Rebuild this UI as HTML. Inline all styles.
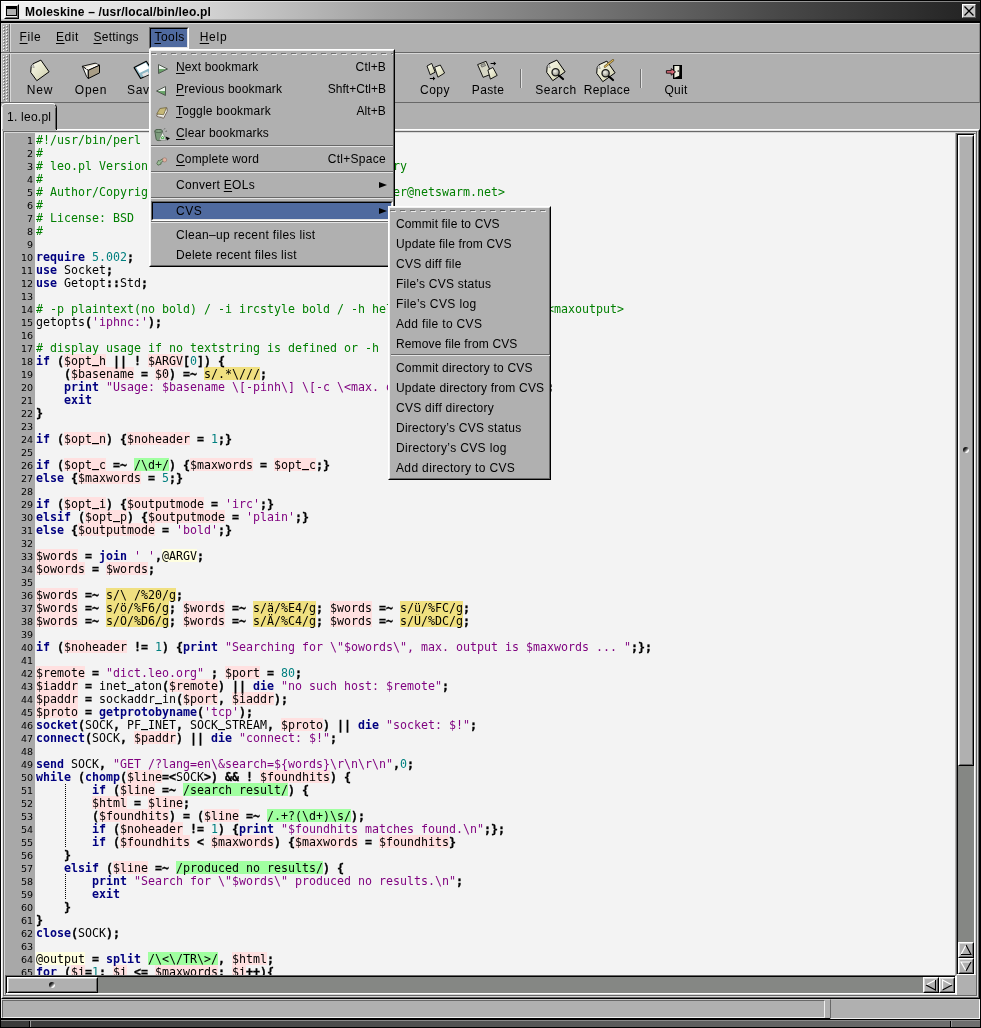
<!DOCTYPE html>
<html lang="en">
<head>
<meta charset="utf-8">
<title>Moleskine - /usr/local/bin/leo.pl</title>
<style>
*{box-sizing:border-box;margin:0;padding:0}
html,body{width:981px;height:1028px;overflow:hidden}
body{position:relative;will-change:transform;background:#000;font-family:"Liberation Sans",sans-serif;font-size:12px;color:#000;line-height:14px}
.a{position:absolute}
u{text-decoration:underline;text-decoration-thickness:1px;text-underline-offset:2px;text-decoration-skip-ink:none}
/* ---------- title bar ---------- */
#title{left:1px;top:1px;width:979px;height:20px;background:linear-gradient(to right,#f2f2f2 0,#e6e6e6 100px,#d4d4d4 200px,#a2a2a2 380px,#888 500px,#484848 780px,#222 979px)}
#title:before{content:"";position:absolute;left:0;top:0;width:100%;height:1px;background:linear-gradient(to right,#fff,#808080)}
#title:after{content:"";position:absolute;left:0;bottom:0;width:100%;height:2px;background:linear-gradient(rgba(0,0,0,.1),rgba(0,0,0,.3))}
#ttext{left:25px;top:5px;letter-spacing:.18px;font-weight:bold;white-space:pre;z-index:2}
#wicon{left:4px;top:4px;width:15px;height:15px;border:1px solid;border-color:#fff #000 #000 #fff;z-index:2}
#wicon:before{content:"";position:absolute;left:0;top:0;right:0;bottom:0;border:1px solid;border-color:transparent #707070 #707070 transparent}
#wicon i{position:absolute;left:1px;top:1px;width:11px;height:10px;border:1px solid #000;border-top-width:3px;background:#b0b0b0}
#close{left:962px;top:4px;width:14px;height:14px;border:1px solid;border-color:#fff #555 #555 #fff;background:#c4c4c4;z-index:2}
/* ---------- bars ---------- */
.bar{left:1px;width:979px;background:#b0b0b0;border-top:1px solid #d8d8d8;border-bottom:1px solid #686868;border-right:1px solid #888}
.hnd{left:0;top:0;width:9px;bottom:0;border-left:1px solid #d8d8d8;border-right:1px solid #686868}
.hnd i{position:absolute;left:0;right:0;top:1px;bottom:1px;background-repeat:repeat-y;background-size:1px 3px;
background-image:linear-gradient(#fff,#fff 1px,transparent 1px),linear-gradient(#686868,#686868 1px,transparent 1px),linear-gradient(#fff,#fff 1px,transparent 1px),linear-gradient(#686868,#686868 1px,transparent 1px);
background-position:1px 1px,2px 2px,4px 0,5px 1px}
.hl{left:9px;top:0;bottom:0;width:1px;background:#d8d8d8}
.mi{top:6px;white-space:pre}
.tb{top:29px;white-space:pre;text-align:center}
.tsep{top:15px;width:2px;height:19px;border-left:1px solid #707070;border-right:1px solid #e0e0e0}
/* ---------- notebook ---------- */
#nb{left:1px;top:103px;width:979px;height:896px;background:#b0b0b0}
#tab{left:0;top:0;width:56px;height:27px;border-top:1px solid #fff;border-left:1px solid #fff;border-right:1px solid #000;border-radius:5px 5px 0 0;background:#b0b0b0}
#tab:after{content:"";position:absolute;right:0;top:4px;bottom:0;width:1px;background:#606060}
#tab:before{content:"";position:absolute;left:0;top:3px;bottom:0;width:1px;background:#e0e0e0}
#tabtx{left:5px;top:6px;letter-spacing:.25px;white-space:pre}
#page{left:0;top:26px;width:979px;height:870px;border:solid;border-width:1px 1px 1px 1px;border-color:#fff #000 #000 #fff}
#page:before{content:"";position:absolute;left:0;top:0;right:0;bottom:0;border:1px solid;border-color:#e0e0e0 #686868 #686868 #e0e0e0}
#tabjoin{left:1px;top:26px;width:54px;height:2px;background:#b0b0b0}
#tabjoin:after{content:"";position:absolute;left:0;top:1px;width:100%;height:1px;background:#b8b8b8}
/* etched frame */
#etch1{left:3px;top:131px;width:974px;height:865px;border:1px solid #686868}
#etch2{left:4px;top:132px;width:974px;height:865px;border:1px solid #d8d8d8}
/* ---------- editor ---------- */
#ed{left:5px;top:133px;width:950px;height:842px;z-index:0;background:#f3f3f3;overflow:hidden;font-family:"DejaVu Sans Mono","Liberation Mono",monospace;font-size:11.63px;line-height:13px}
#ed:before{content:"";position:absolute;left:0;top:0;width:30px;height:100%;background:#a8a8a8}
.ln{position:relative;height:13px;padding-left:31px;white-space:pre}
.ln span{display:inline-block;height:13px;line-height:15px;vertical-align:top;overflow:visible;white-space:pre}
.no{position:absolute;left:0;top:0;width:28px;text-align:right;font:normal 9.5px/15px "DejaVu Sans","Liberation Sans",sans-serif;color:#000}
.g{position:absolute;left:60px;top:0;width:1px;height:13px;background:repeating-linear-gradient(to bottom,#000 0,#000 1px,transparent 1px,transparent 2px)}
.g1{top:1px;height:12px}
.ln em{font-style:normal;font-weight:bold;position:relative;top:-2px}
.c{color:#007f00}.k{color:#00007f;font-weight:bold}.n{color:#007f7f}.s{color:#7f007f}
.o{font-weight:bold;-webkit-text-stroke:.3px #000}.v{background:#ffe0e0}.a2{background:#ffffe0}.r{background:#a0ffa0}.u2{background:#f0e080}
/* ---------- scrollbars ---------- */
.trough{background:#868885;border:solid;border-width:1px;border-color:#686868 #fff #fff #686868}
.trough:before{content:"";position:absolute;left:0;top:0;right:0;bottom:0;border:1px solid;border-color:#000 #d8d8d8 #d8d8d8 #000}
.sl{background:#b0b0b0;border:1px solid;border-color:#fff #000 #000 #fff}
.sl:before{content:"";position:absolute;left:0;top:0;right:0;bottom:0;border:1px solid;border-color:#d8d8d8 #686868 #686868 #d8d8d8}
.dim{position:absolute;width:6px;height:6px;border-radius:50%;background:linear-gradient(135deg,#000 0,#1a1a1a 30%,#707070 52%,#fff 72%,#f0f0f0 100%)}
/* ---------- status ---------- */
#status{left:1px;top:999px;width:979px;height:19px;background:#b0b0b0;border-top:1px solid #c8c8c8;border-left:1px solid #e8e8e8}
#st1{left:0;top:0;width:823px;height:18px;border:1px solid;border-color:#686868 #f0f0f0 #f0f0f0 #686868}
#st2{left:828px;top:-1px;width:150px;height:20px;background:#b0b0b0;border:1px solid;border-color:#c0c0c0 #f8f8f8 #f0f0f0 #686868}
#botf{left:1px;top:1020px;width:979px;height:7px;background:linear-gradient(to right,#3a3a3a,#6e6e6e);border-top:1px solid #8c8c8c}
.notch{top:0;width:2px;height:6px;border-left:1px solid #000;border-right:1px solid #9a9a9a}
/* ---------- menus ---------- */
.menu{background:#b0b0b0;border:1px solid;border-color:#fff #000 #000 #fff;z-index:10}
.menu:before{content:"";position:absolute;left:0;top:0;right:0;bottom:0;border:1px solid;border-color:#f0f0f0 #686868 #686868 #f0f0f0}
.it{position:absolute;left:0;white-space:pre}
.sc{position:absolute;white-space:pre;text-align:right}
.sep{position:absolute;height:2px;border-top:1px solid #686868;border-bottom:1px solid #e4e4e4}
.tear{position:absolute;height:1px;background:repeating-linear-gradient(to right,#ececec 0,#ececec 5px,transparent 5px,transparent 10px)}
.tear2{position:absolute;height:1px;background:repeating-linear-gradient(to right,#707070 0,#707070 5px,transparent 5px,transparent 10px)}
.sel{background:#4f6a9f;border:1px solid;border-color:#686868 #fff #fff #686868}
.sel:before{content:"";position:absolute;left:0;top:0;right:0;bottom:0;border:1px solid;border-color:#000 #e4e4e4 #e4e4e4 #000}
.arr{position:absolute;width:0;height:0;border-left:8px solid #000;border-top:3.5px solid transparent;border-bottom:3.5px solid transparent}
</style>
</head>
<body>
<!-- title bar -->
<div id="title" class="a"></div>
<div id="wicon" class="a"><i></i></div>
<div id="ttext" class="a">Moleskine – /usr/local/bin/leo.pl</div>
<div id="close" class="a"><svg width="12" height="12" viewBox="0 0 12 12" style="display:block"><path d="M1.5 1.5L10.5 10.5M10.5 1.5L1.5 10.5" stroke="#000" stroke-width="1.3" fill="none"/></svg></div>

<!-- menu bar -->
<div class="a bar" style="top:23px;height:30px">
 <div class="a hnd"><i></i></div><div class="a hl"></div>
 <div class="a mi" style="left:18.6px;letter-spacing:.6px"><u>F</u>ile</div>
 <div class="a mi" style="left:55px;letter-spacing:.55px"><u>E</u>dit</div>
 <div class="a mi" style="left:92.5px;letter-spacing:.25px"><u>S</u>ettings</div>
 <div class="a sel" style="left:148px;top:3px;width:40px;height:22px"></div>
 <div class="a mi" style="left:153.5px;letter-spacing:.44px"><u>T</u>ools</div>
 <div class="a mi" style="left:198.7px;letter-spacing:.75px"><u>H</u>elp</div>
</div>

<!-- tool bar -->
<div class="a bar" style="top:53px;height:50px">
 <div class="a hnd"><i></i></div><div class="a hl"></div>
 <div class="a tb" style="left:19px;width:40px;letter-spacing:.8px">New</div>
 <div class="a tb" style="left:65px;width:50px;letter-spacing:.75px">Open</div>
 <div class="a tb" style="left:121px;width:40px;letter-spacing:.6px">Save</div>
 <div class="a tb" style="left:414px;width:40px;letter-spacing:.5px">Copy</div>
 <div class="a tb" style="left:462px;width:50px;letter-spacing:.35px">Paste</div>
 <div class="a tsep" style="left:519px"></div>
 <div class="a tb" style="left:530px;width:50px;letter-spacing:.6px">Search</div>
 <div class="a tb" style="left:581px;width:50px;letter-spacing:.35px">Replace</div>
 <div class="a tsep" style="left:639px"></div>
 <div class="a tb" style="left:655px;width:40px;letter-spacing:.3px">Quit</div>
</div>

<svg class="a" style="left:0;top:53px;z-index:1" width="981" height="50" viewBox="0 53 981 50">
<defs>
<linearGradient id="gp" x1="0" y1="0" x2="1" y2="1"><stop offset="0" stop-color="#fbfbee"/><stop offset=".5" stop-color="#e6e6cc"/><stop offset="1" stop-color="#c9c9a8"/></linearGradient>
<radialGradient id="gl" cx=".4" cy=".35" r=".7"><stop offset="0" stop-color="#f0f0e8"/><stop offset="1" stop-color="#8c8c80"/></radialGradient>
</defs>
<!-- New -->
<g transform="translate(0,0)"><path d="M32.8 63.9L40.9 60.1L49.1 71.8L36.8 80.7L30.7 72.3L31.2 66.6Z" fill="url(#gp)" stroke="#000" stroke-width="1" stroke-linejoin="round"/><path d="M31.4 66.4L33 64.1L34.2 67.6Z" fill="#fff" stroke="#555" stroke-width=".5"/></g>
<!-- Open -->
<path d="M82.3 66.3L95.2 63.2L99.4 65.2L88.4 70.4Z" fill="#e9e4d6" stroke="#000" stroke-width=".9" stroke-linejoin="round"/>
<path d="M82.3 66.3L88.3 70.3L88.3 78.5L86.6 76.6Z" fill="#f5f5f0" stroke="#000" stroke-width=".9" stroke-linejoin="round"/>
<path d="M88.3 70.3L99.5 65.2L99.5 72.9L88.3 78.5Z" fill="#a89d86" stroke="#000" stroke-width="1" stroke-linejoin="round"/>
<path d="M86.2 68.8L97.5 64.6" stroke="#fff" stroke-width="1.3"/>
<!-- Save -->
<path d="M134.1 67.6L146.3 61.3L153.6 72.4L140.6 78.4Z" fill="#8db8c6" stroke="#000" stroke-width="1.1" stroke-linejoin="round"/>
<path d="M136.2 67.6L145.8 62.8L149.3 68.3L139.6 73Z" fill="#fff"/>
<path d="M142 74L147.6 71.4L149.2 74.2L143.6 76.8Z" fill="#e4e4e4"/>
<!-- Copy -->
<path d="M427 66L431.7 63.4L435.2 72.2L430.2 74.8Z" fill="url(#gp)" stroke="#000" stroke-width=".9" stroke-linejoin="round"/>
<path d="M434.6 67.2L440.3 65L444.6 73L437.9 77.2Z" fill="url(#gp)" stroke="#000" stroke-width=".9" stroke-linejoin="round"/>
<path d="M429.8 78h3.2v-1.6l2.4 2.1l-2.4 2.1v-1.6h-3.2Z" fill="#000"/>
<!-- Paste -->
<path d="M477.6 64.6L486.1 61.3L491.6 74L483.1 77.3Z" fill="#d6d6c4" stroke="#000" stroke-width=".9" stroke-linejoin="round"/>
<path d="M480.8 64.9L484.6 63.4L485.6 65.6L481.8 67.1Z" fill="#a8a8a0" stroke="#444" stroke-width=".6"/>
<path d="M487.9 70L492.9 67.5L497.2 75.4L490.4 79.1Z" fill="url(#gp)" stroke="#000" stroke-width=".9" stroke-linejoin="round"/>
<path d="M490.6 63h3.2v-1.6l2.4 2.1l-2.4 2.1v-1.6h-3.2Z" fill="#000"/>
<!-- Search -->
<g transform="translate(516,0)"><path d="M32.8 63.9L40.9 60.1L49.1 71.8L36.8 80.7L30.7 72.3L31.2 66.6Z" fill="url(#gp)" stroke="#000" stroke-width="1" stroke-linejoin="round"/><path d="M31.4 66.4L33 64.1L34.2 67.6Z" fill="#fff" stroke="#555" stroke-width=".5"/></g>
<g transform="translate(0,0)"><path d="M558.4 75L563 79" stroke="#000" stroke-width="2.2" stroke-linecap="round"/><circle cx="555.6" cy="72.3" r="3.6" fill="url(#gl)" stroke="#1a1a1a" stroke-width="1.3"/></g>
<!-- Replace -->
<g transform="translate(566,1)"><path d="M32.8 63.9L40.9 60.1L49.1 71.8L36.8 80.7L30.7 72.3L31.2 66.6Z" fill="url(#gp)" stroke="#000" stroke-width="1" stroke-linejoin="round"/><path d="M31.4 66.4L33 64.1L34.2 67.6Z" fill="#fff" stroke="#555" stroke-width=".5"/></g>
<g transform="translate(50,1)"><path d="M558.4 75L563 79" stroke="#000" stroke-width="2.2" stroke-linecap="round"/><circle cx="555.6" cy="72.3" r="3.6" fill="url(#gl)" stroke="#1a1a1a" stroke-width="1.3"/></g>
<path d="M604.9 66.7L613.1 60.1" stroke="#5a4a20" stroke-width="2.2" stroke-linecap="round"/>
<path d="M604.9 66.7L613.1 60.1" stroke="#dcb85c" stroke-width="1.2" stroke-linecap="round"/>
<!-- Quit -->
<rect x="673" y="65" width="9" height="14" fill="#000"/>
<path d="M674.4 66H679.4L679.2 75.8L674.4 77.8Z" fill="#ebebdc"/>
<rect x="677.6" y="70.4" width="1.3" height="1.3" fill="#000"/>
<path d="M666.4 70.6H671.2V68.6L675.6 71.9L671.2 75.2V73.2H666.4Z" fill="#d46876" stroke="#000" stroke-width=".8" stroke-linejoin="round"/>
</svg>

<!-- notebook -->
<div id="nb" class="a">
 <div id="page" class="a"></div>
 <div id="tab" class="a"><div id="tabtx" class="a">1. leo.pl</div></div>
 <div id="tabjoin" class="a"></div>
</div>
<div id="etch2" class="a"></div>
<div id="etch1" class="a"></div>

<!-- editor -->
<div id="ed" class="a">
<div class="ln" style="z-index:69"><b class="no">1</b><span class="c" style="width:105px">#!/usr/bin/perl</span></div>
<div class="ln" style="z-index:68"><b class="no">2</b><span class="c" style="width:7px">#</span></div>
<div class="ln" style="z-index:67"><b class="no">3</b><span class="c" style="width:371px"># leo.pl Version 0.3 - search dict.leo.org dictionary</span></div>
<div class="ln" style="z-index:66"><b class="no">4</b><span class="c" style="width:7px">#</span></div>
<div class="ln" style="z-index:65"><b class="no">5</b><span class="c" style="width:469px"># Author/Copyright: 2000-01 Michael Ziegler &lt;mziegler@netswarm.net&gt;</span></div>
<div class="ln" style="z-index:64"><b class="no">6</b><span class="c" style="width:7px">#</span></div>
<div class="ln" style="z-index:63"><b class="no">7</b><span class="c" style="width:98px"># License: BSD</span></div>
<div class="ln" style="z-index:62"><b class="no">8</b><span class="c" style="width:7px">#</span></div>
<div class="ln" style="z-index:61"><b class="no">9</b></div>
<div class="ln" style="z-index:60"><b class="no">10</b><span class="k" style="width:49px">require</span><span class="p" style="width:7px"> </span><span class="n" style="width:35px">5.002</span><span class="o" style="width:7px">;</span></div>
<div class="ln" style="z-index:59"><b class="no">11</b><span class="k" style="width:21px">use</span><span class="p" style="width:49px"> Socket</span><span class="o" style="width:7px">;</span></div>
<div class="ln" style="z-index:58"><b class="no">12</b><span class="k" style="width:21px">use</span><span class="p" style="width:49px"> Getopt</span><span class="o" style="width:14px">::</span><span class="p" style="width:21px">Std</span><span class="o" style="width:7px">;</span></div>
<div class="ln" style="z-index:57"><b class="no">13</b></div>
<div class="ln" style="z-index:56"><b class="no">14</b><span class="c" style="width:588px"># -p plaintext(no bold) / -i ircstyle bold / -h help / -n no header / -c &lt;maxoutput&gt;</span></div>
<div class="ln" style="z-index:55"><b class="no">15</b><span class="p" style="width:49px">getopts</span><span class="o" style="width:7px">(</span><span class="s" style="width:56px">'iphnc:'</span><span class="o" style="width:14px">);</span></div>
<div class="ln" style="z-index:54"><b class="no">16</b></div>
<div class="ln" style="z-index:53"><b class="no">17</b><span class="c" style="width:343px"># display usage if no textstring is defined or -h</span></div>
<div class="ln" style="z-index:52"><b class="no">18</b><span class="k" style="width:14px">if</span><span class="p" style="width:7px"> </span><span class="o" style="width:7px">(</span><span class="v" style="width:42px">$opt<em>_</em>h</span><span class="p" style="width:7px"> </span><span class="o" style="width:14px">||</span><span class="p" style="width:7px"> </span><span class="o" style="width:7px">!</span><span class="p" style="width:7px"> </span><span class="v" style="width:35px">$ARGV</span><span class="o" style="width:7px">[</span><span class="n" style="width:7px">0</span><span class="o" style="width:14px">])</span><span class="p" style="width:7px"> </span><span class="o" style="width:7px">{</span></div>
<div class="ln" style="z-index:51"><b class="no">19</b><span class="p" style="width:28px">    </span><span class="o" style="width:7px">(</span><span class="v" style="width:63px">$basename</span><span class="p" style="width:7px"> </span><span class="o" style="width:7px">=</span><span class="p" style="width:7px"> </span><span class="v" style="width:14px">$0</span><span class="o" style="width:7px">)</span><span class="p" style="width:7px"> </span><span class="o" style="width:14px">=~</span><span class="p" style="width:7px"> </span><span class="u2" style="width:56px">s/.*\///</span><span class="o" style="width:7px">;</span></div>
<div class="ln" style="z-index:50"><b class="no">20</b><span class="p" style="width:28px">    </span><span class="k" style="width:35px">print</span><span class="p" style="width:7px"> </span><span class="s" style="width:441px">"Usage: $basename \[-pinh\] \[-c \&lt;max. output\&gt;\] \&lt;words\&gt;\n"</span><span class="o" style="width:7px">;</span></div>
<div class="ln" style="z-index:49"><b class="no">21</b><span class="p" style="width:28px">    </span><span class="k" style="width:28px">exit</span></div>
<div class="ln" style="z-index:48"><b class="no">22</b><span class="o" style="width:7px">}</span></div>
<div class="ln" style="z-index:47"><b class="no">23</b></div>
<div class="ln" style="z-index:46"><b class="no">24</b><span class="k" style="width:14px">if</span><span class="p" style="width:7px"> </span><span class="o" style="width:7px">(</span><span class="v" style="width:42px">$opt<em>_</em>n</span><span class="o" style="width:7px">)</span><span class="p" style="width:7px"> </span><span class="o" style="width:7px">{</span><span class="v" style="width:63px">$noheader</span><span class="p" style="width:7px"> </span><span class="o" style="width:7px">=</span><span class="p" style="width:7px"> </span><span class="n" style="width:7px">1</span><span class="o" style="width:14px">;}</span></div>
<div class="ln" style="z-index:45"><b class="no">25</b></div>
<div class="ln" style="z-index:44"><b class="no">26</b><span class="k" style="width:14px">if</span><span class="p" style="width:7px"> </span><span class="o" style="width:7px">(</span><span class="v" style="width:42px">$opt<em>_</em>c</span><span class="p" style="width:7px"> </span><span class="o" style="width:14px">=~</span><span class="p" style="width:7px"> </span><span class="r" style="width:35px">/\d+/</span><span class="o" style="width:7px">)</span><span class="p" style="width:7px"> </span><span class="o" style="width:7px">{</span><span class="v" style="width:63px">$maxwords</span><span class="p" style="width:7px"> </span><span class="o" style="width:7px">=</span><span class="p" style="width:7px"> </span><span class="v" style="width:42px">$opt<em>_</em>c</span><span class="o" style="width:14px">;}</span></div>
<div class="ln" style="z-index:43"><b class="no">27</b><span class="k" style="width:28px">else</span><span class="p" style="width:7px"> </span><span class="o" style="width:7px">{</span><span class="v" style="width:63px">$maxwords</span><span class="p" style="width:7px"> </span><span class="o" style="width:7px">=</span><span class="p" style="width:7px"> </span><span class="n" style="width:7px">5</span><span class="o" style="width:14px">;}</span></div>
<div class="ln" style="z-index:42"><b class="no">28</b></div>
<div class="ln" style="z-index:41"><b class="no">29</b><span class="k" style="width:14px">if</span><span class="p" style="width:7px"> </span><span class="o" style="width:7px">(</span><span class="v" style="width:42px">$opt<em>_</em>i</span><span class="o" style="width:7px">)</span><span class="p" style="width:7px"> </span><span class="o" style="width:7px">{</span><span class="v" style="width:77px">$outputmode</span><span class="p" style="width:7px"> </span><span class="o" style="width:7px">=</span><span class="p" style="width:7px"> </span><span class="s" style="width:35px">'irc'</span><span class="o" style="width:14px">;}</span></div>
<div class="ln" style="z-index:40"><b class="no">30</b><span class="k" style="width:35px">elsif</span><span class="p" style="width:7px"> </span><span class="o" style="width:7px">(</span><span class="v" style="width:42px">$opt<em>_</em>p</span><span class="o" style="width:7px">)</span><span class="p" style="width:7px"> </span><span class="o" style="width:7px">{</span><span class="v" style="width:77px">$outputmode</span><span class="p" style="width:7px"> </span><span class="o" style="width:7px">=</span><span class="p" style="width:7px"> </span><span class="s" style="width:49px">'plain'</span><span class="o" style="width:14px">;}</span></div>
<div class="ln" style="z-index:39"><b class="no">31</b><span class="k" style="width:28px">else</span><span class="p" style="width:7px"> </span><span class="o" style="width:7px">{</span><span class="v" style="width:77px">$outputmode</span><span class="p" style="width:7px"> </span><span class="o" style="width:7px">=</span><span class="p" style="width:7px"> </span><span class="s" style="width:42px">'bold'</span><span class="o" style="width:14px">;}</span></div>
<div class="ln" style="z-index:38"><b class="no">32</b></div>
<div class="ln" style="z-index:37"><b class="no">33</b><span class="v" style="width:42px">$words</span><span class="p" style="width:7px"> </span><span class="o" style="width:7px">=</span><span class="p" style="width:7px"> </span><span class="k" style="width:28px">join</span><span class="p" style="width:7px"> </span><span class="s" style="width:21px">' '</span><span class="o" style="width:7px">,</span><span class="a2" style="width:35px">@ARGV</span><span class="o" style="width:7px">;</span></div>
<div class="ln" style="z-index:36"><b class="no">34</b><span class="v" style="width:49px">$owords</span><span class="p" style="width:7px"> </span><span class="o" style="width:7px">=</span><span class="p" style="width:7px"> </span><span class="v" style="width:42px">$words</span><span class="o" style="width:7px">;</span></div>
<div class="ln" style="z-index:35"><b class="no">35</b></div>
<div class="ln" style="z-index:34"><b class="no">36</b><span class="v" style="width:42px">$words</span><span class="p" style="width:7px"> </span><span class="o" style="width:14px">=~</span><span class="p" style="width:7px"> </span><span class="u2" style="width:70px">s/\ /%20/g</span><span class="o" style="width:7px">;</span></div>
<div class="ln" style="z-index:33"><b class="no">37</b><span class="v" style="width:42px">$words</span><span class="p" style="width:7px"> </span><span class="o" style="width:14px">=~</span><span class="p" style="width:7px"> </span><span class="u2" style="width:63px">s/ö/%F6/g</span><span class="o" style="width:7px">;</span><span class="p" style="width:7px"> </span><span class="v" style="width:42px">$words</span><span class="p" style="width:7px"> </span><span class="o" style="width:14px">=~</span><span class="p" style="width:7px"> </span><span class="u2" style="width:63px">s/ä/%E4/g</span><span class="o" style="width:7px">;</span><span class="p" style="width:7px"> </span><span class="v" style="width:42px">$words</span><span class="p" style="width:7px"> </span><span class="o" style="width:14px">=~</span><span class="p" style="width:7px"> </span><span class="u2" style="width:63px">s/ü/%FC/g</span><span class="o" style="width:7px">;</span></div>
<div class="ln" style="z-index:32"><b class="no">38</b><span class="v" style="width:42px">$words</span><span class="p" style="width:7px"> </span><span class="o" style="width:14px">=~</span><span class="p" style="width:7px"> </span><span class="u2" style="width:63px">s/Ö/%D6/g</span><span class="o" style="width:7px">;</span><span class="p" style="width:7px"> </span><span class="v" style="width:42px">$words</span><span class="p" style="width:7px"> </span><span class="o" style="width:14px">=~</span><span class="p" style="width:7px"> </span><span class="u2" style="width:63px">s/Ä/%C4/g</span><span class="o" style="width:7px">;</span><span class="p" style="width:7px"> </span><span class="v" style="width:42px">$words</span><span class="p" style="width:7px"> </span><span class="o" style="width:14px">=~</span><span class="p" style="width:7px"> </span><span class="u2" style="width:63px">s/Ü/%DC/g</span><span class="o" style="width:7px">;</span></div>
<div class="ln" style="z-index:31"><b class="no">39</b></div>
<div class="ln" style="z-index:30"><b class="no">40</b><span class="k" style="width:14px">if</span><span class="p" style="width:7px"> </span><span class="o" style="width:7px">(</span><span class="v" style="width:63px">$noheader</span><span class="p" style="width:7px"> </span><span class="o" style="width:14px">!=</span><span class="p" style="width:7px"> </span><span class="n" style="width:7px">1</span><span class="o" style="width:7px">)</span><span class="p" style="width:7px"> </span><span class="o" style="width:7px">{</span><span class="k" style="width:35px">print</span><span class="p" style="width:7px"> </span><span class="s" style="width:406px">"Searching for \"$owords\", max. output is $maxwords ... "</span><span class="o" style="width:21px">;};</span></div>
<div class="ln" style="z-index:29"><b class="no">41</b></div>
<div class="ln" style="z-index:28"><b class="no">42</b><span class="v" style="width:49px">$remote</span><span class="p" style="width:7px"> </span><span class="o" style="width:7px">=</span><span class="p" style="width:7px"> </span><span class="s" style="width:98px">"dict.leo.org"</span><span class="p" style="width:7px"> </span><span class="o" style="width:7px">;</span><span class="p" style="width:7px"> </span><span class="v" style="width:35px">$port</span><span class="p" style="width:7px"> </span><span class="o" style="width:7px">=</span><span class="p" style="width:7px"> </span><span class="n" style="width:14px">80</span><span class="o" style="width:7px">;</span></div>
<div class="ln" style="z-index:27"><b class="no">43</b><span class="v" style="width:42px">$iaddr</span><span class="p" style="width:7px"> </span><span class="o" style="width:7px">=</span><span class="p" style="width:70px"> inet<em>_</em>aton</span><span class="o" style="width:7px">(</span><span class="v" style="width:49px">$remote</span><span class="o" style="width:7px">)</span><span class="p" style="width:7px"> </span><span class="o" style="width:14px">||</span><span class="p" style="width:7px"> </span><span class="k" style="width:21px">die</span><span class="p" style="width:7px"> </span><span class="s" style="width:161px">"no such host: $remote"</span><span class="o" style="width:7px">;</span></div>
<div class="ln" style="z-index:26"><b class="no">44</b><span class="v" style="width:42px">$paddr</span><span class="p" style="width:7px"> </span><span class="o" style="width:7px">=</span><span class="p" style="width:84px"> sockaddr<em>_</em>in</span><span class="o" style="width:7px">(</span><span class="v" style="width:35px">$port</span><span class="o" style="width:7px">,</span><span class="p" style="width:7px"> </span><span class="v" style="width:42px">$iaddr</span><span class="o" style="width:14px">);</span></div>
<div class="ln" style="z-index:25"><b class="no">45</b><span class="v" style="width:42px">$proto</span><span class="p" style="width:7px"> </span><span class="o" style="width:7px">=</span><span class="p" style="width:7px"> </span><span class="k" style="width:98px">getprotobyname</span><span class="o" style="width:7px">(</span><span class="s" style="width:35px">'tcp'</span><span class="o" style="width:14px">);</span></div>
<div class="ln" style="z-index:24"><b class="no">46</b><span class="k" style="width:42px">socket</span><span class="o" style="width:7px">(</span><span class="p" style="width:28px">SOCK</span><span class="o" style="width:7px">,</span><span class="p" style="width:56px"> PF<em>_</em>INET</span><span class="o" style="width:7px">,</span><span class="p" style="width:84px"> SOCK<em>_</em>STREAM</span><span class="o" style="width:7px">,</span><span class="p" style="width:7px"> </span><span class="v" style="width:42px">$proto</span><span class="o" style="width:7px">)</span><span class="p" style="width:7px"> </span><span class="o" style="width:14px">||</span><span class="p" style="width:7px"> </span><span class="k" style="width:21px">die</span><span class="p" style="width:7px"> </span><span class="s" style="width:84px">"socket: $!"</span><span class="o" style="width:7px">;</span></div>
<div class="ln" style="z-index:23"><b class="no">47</b><span class="k" style="width:49px">connect</span><span class="o" style="width:7px">(</span><span class="p" style="width:28px">SOCK</span><span class="o" style="width:7px">,</span><span class="p" style="width:7px"> </span><span class="v" style="width:42px">$paddr</span><span class="o" style="width:7px">)</span><span class="p" style="width:7px"> </span><span class="o" style="width:14px">||</span><span class="p" style="width:7px"> </span><span class="k" style="width:21px">die</span><span class="p" style="width:7px"> </span><span class="s" style="width:91px">"connect: $!"</span><span class="o" style="width:7px">;</span></div>
<div class="ln" style="z-index:22"><b class="no">48</b></div>
<div class="ln" style="z-index:21"><b class="no">49</b><span class="k" style="width:28px">send</span><span class="p" style="width:35px"> SOCK</span><span class="o" style="width:7px">,</span><span class="p" style="width:7px"> </span><span class="s" style="width:280px">"GET /?lang=en\&amp;search=${words}\r\n\r\n"</span><span class="o" style="width:7px">,</span><span class="n" style="width:7px">0</span><span class="o" style="width:7px">;</span></div>
<div class="ln" style="z-index:20"><b class="no">50</b><span class="k" style="width:35px">while</span><span class="p" style="width:7px"> </span><span class="o" style="width:7px">(</span><span class="k" style="width:35px">chomp</span><span class="o" style="width:7px">(</span><span class="v" style="width:35px">$line</span><span class="o" style="width:14px">=&lt;</span><span class="p" style="width:28px">SOCK</span><span class="o" style="width:14px">&gt;)</span><span class="p" style="width:7px"> </span><span class="o" style="width:14px">&amp;&amp;</span><span class="p" style="width:7px"> </span><span class="o" style="width:7px">!</span><span class="p" style="width:7px"> </span><span class="v" style="width:70px">$foundhits</span><span class="o" style="width:7px">)</span><span class="p" style="width:7px"> </span><span class="o" style="width:7px">{</span></div>
<div class="ln" style="z-index:19"><b class="no">51</b><i class="g g1"></i><span class="p" style="width:56px">        </span><span class="k" style="width:14px">if</span><span class="p" style="width:7px"> </span><span class="o" style="width:7px">(</span><span class="v" style="width:35px">$line</span><span class="p" style="width:7px"> </span><span class="o" style="width:14px">=~</span><span class="p" style="width:7px"> </span><span class="r" style="width:105px">/search result/</span><span class="o" style="width:7px">)</span><span class="p" style="width:7px"> </span><span class="o" style="width:7px">{</span></div>
<div class="ln" style="z-index:18"><b class="no">52</b><i class="g"></i><span class="p" style="width:56px">        </span><span class="v" style="width:35px">$html</span><span class="p" style="width:7px"> </span><span class="o" style="width:7px">=</span><span class="p" style="width:7px"> </span><span class="v" style="width:35px">$line</span><span class="o" style="width:7px">;</span></div>
<div class="ln" style="z-index:17"><b class="no">53</b><i class="g g1"></i><span class="p" style="width:56px">        </span><span class="o" style="width:7px">(</span><span class="v" style="width:70px">$foundhits</span><span class="o" style="width:7px">)</span><span class="p" style="width:7px"> </span><span class="o" style="width:7px">=</span><span class="p" style="width:7px"> </span><span class="o" style="width:7px">(</span><span class="v" style="width:35px">$line</span><span class="p" style="width:7px"> </span><span class="o" style="width:14px">=~</span><span class="p" style="width:7px"> </span><span class="r" style="width:84px">/.+?(\d+)\s/</span><span class="o" style="width:14px">);</span></div>
<div class="ln" style="z-index:16"><b class="no">54</b><i class="g"></i><span class="p" style="width:56px">        </span><span class="k" style="width:14px">if</span><span class="p" style="width:7px"> </span><span class="o" style="width:7px">(</span><span class="v" style="width:63px">$noheader</span><span class="p" style="width:7px"> </span><span class="o" style="width:14px">!=</span><span class="p" style="width:7px"> </span><span class="n" style="width:7px">1</span><span class="o" style="width:7px">)</span><span class="p" style="width:7px"> </span><span class="o" style="width:7px">{</span><span class="k" style="width:35px">print</span><span class="p" style="width:7px"> </span><span class="s" style="width:203px">"$foundhits matches found.\n"</span><span class="o" style="width:21px">;};</span></div>
<div class="ln" style="z-index:15"><b class="no">55</b><i class="g g1"></i><span class="p" style="width:56px">        </span><span class="k" style="width:14px">if</span><span class="p" style="width:7px"> </span><span class="o" style="width:7px">(</span><span class="v" style="width:70px">$foundhits</span><span class="p" style="width:7px"> </span><span class="o" style="width:7px">&lt;</span><span class="p" style="width:7px"> </span><span class="v" style="width:63px">$maxwords</span><span class="o" style="width:7px">)</span><span class="p" style="width:7px"> </span><span class="o" style="width:7px">{</span><span class="v" style="width:63px">$maxwords</span><span class="p" style="width:7px"> </span><span class="o" style="width:7px">=</span><span class="p" style="width:7px"> </span><span class="v" style="width:70px">$foundhits</span><span class="o" style="width:7px">}</span></div>
<div class="ln" style="z-index:14"><b class="no">56</b><span class="p" style="width:28px">    </span><span class="o" style="width:7px">}</span></div>
<div class="ln" style="z-index:13"><b class="no">57</b><span class="p" style="width:28px">    </span><span class="k" style="width:35px">elsif</span><span class="p" style="width:7px"> </span><span class="o" style="width:7px">(</span><span class="v" style="width:35px">$line</span><span class="p" style="width:7px"> </span><span class="o" style="width:14px">=~</span><span class="p" style="width:7px"> </span><span class="r" style="width:147px">/produced no results/</span><span class="o" style="width:7px">)</span><span class="p" style="width:7px"> </span><span class="o" style="width:7px">{</span></div>
<div class="ln" style="z-index:12"><b class="no">58</b><i class="g"></i><span class="p" style="width:56px">        </span><span class="k" style="width:35px">print</span><span class="p" style="width:7px"> </span><span class="s" style="width:322px">"Search for \"$words\" produced no results.\n"</span><span class="o" style="width:7px">;</span></div>
<div class="ln" style="z-index:11"><b class="no">59</b><i class="g g1"></i><span class="p" style="width:56px">        </span><span class="k" style="width:28px">exit</span></div>
<div class="ln" style="z-index:10"><b class="no">60</b><span class="p" style="width:28px">    </span><span class="o" style="width:7px">}</span></div>
<div class="ln" style="z-index:9"><b class="no">61</b><span class="o" style="width:7px">}</span></div>
<div class="ln" style="z-index:8"><b class="no">62</b><span class="k" style="width:35px">close</span><span class="o" style="width:7px">(</span><span class="p" style="width:28px">SOCK</span><span class="o" style="width:14px">);</span></div>
<div class="ln" style="z-index:7"><b class="no">63</b></div>
<div class="ln" style="z-index:6"><b class="no">64</b><span class="a2" style="width:49px">@output</span><span class="p" style="width:7px"> </span><span class="o" style="width:7px">=</span><span class="p" style="width:7px"> </span><span class="k" style="width:35px">split</span><span class="p" style="width:7px"> </span><span class="r" style="width:70px">/\&lt;\/TR\&gt;/</span><span class="o" style="width:7px">,</span><span class="p" style="width:7px"> </span><span class="v" style="width:35px">$html</span><span class="o" style="width:7px">;</span></div>
<div class="ln" style="z-index:5"><b class="no">65</b><span class="k" style="width:21px">for</span><span class="p" style="width:7px"> </span><span class="o" style="width:7px">(</span><span class="v" style="width:14px">$i</span><span class="o" style="width:7px">=</span><span class="n" style="width:7px">1</span><span class="o" style="width:7px">;</span><span class="p" style="width:7px"> </span><span class="v" style="width:14px">$i</span><span class="p" style="width:7px"> </span><span class="o" style="width:14px">&lt;=</span><span class="p" style="width:7px"> </span><span class="v" style="width:63px">$maxwords</span><span class="o" style="width:7px">;</span><span class="p" style="width:7px"> </span><span class="v" style="width:14px">$i</span><span class="o" style="width:28px">++){</span></div>
</div>

<!-- vertical scrollbar -->
<div class="a" style="left:956px;top:133px;width:20px;height:842px;border:1px solid;border-color:#686868 #d4d4d4 #fff #686868;background:#858784">
 <div class="a" style="left:0;top:0;width:18px;height:840px;border:solid #000;border-width:1px 0 0 1px"></div>
 <div class="a" style="left:17px;top:0;width:1px;height:840px;background:#fff"></div>
 <div class="a sl" style="left:1px;top:1px;width:16px;height:631px"><i class="dim" style="left:4px;top:311px"></i></div>
 <div class="a sl" style="left:1px;top:808px;width:16px;height:16px"><svg width="16" height="16" viewBox="0 0 16 16" style="position:absolute;left:-1px;top:-1px"><path d="M8 3L13 12.5L3 12.5Z" fill="#b0b0b0"/><path d="M8 3L3 12.5" stroke="#fff" stroke-width="1.2" fill="none"/><path d="M3 12.5L13 12.5L8 3" stroke="#000" stroke-width="1.1" fill="none"/></svg></div>
 <div class="a sl" style="left:1px;top:824px;width:16px;height:16px"><svg width="16" height="16" viewBox="0 0 16 16" style="position:absolute;left:-1px;top:-1px"><path d="M3 4L13 4L8 13Z" fill="#b0b0b0"/><path d="M8 13L3 4L13 4" stroke="#fff" stroke-width="1.2" fill="none"/><path d="M13 4L8 13" stroke="#000" stroke-width="1.1" fill="none"/></svg></div>
</div>
<!-- horizontal scrollbar -->
<div class="a" style="left:5px;top:975px;width:952px;height:20px;border:solid;border-width:1px 2px 1px 1px;border-color:#686868 #fff #d4d4d4 #686868;background:#858784">
 <div class="a" style="left:0;top:0;width:949px;height:18px;border:solid #000;border-width:1px 0 0 1px"></div>
 <div class="a" style="left:0;top:17px;width:949px;height:1px;background:#fff"></div>
 <div class="a sl" style="left:1px;top:1px;width:91px;height:16px"><i class="dim" style="left:41px;top:4px"></i></div>
 <div class="a sl" style="left:917px;top:1px;width:16px;height:16px"><svg width="16" height="16" viewBox="0 0 16 16" style="position:absolute;left:-1px;top:-1px"><path d="M3 8L12.5 3L12.5 13Z" fill="#b0b0b0"/><path d="M3 8L12.5 3" stroke="#fff" stroke-width="1.2" fill="none"/><path d="M12.5 3L12.5 13L3 8" stroke="#000" stroke-width="1.1" fill="none"/></svg></div>
 <div class="a sl" style="left:933px;top:1px;width:16px;height:16px"><svg width="16" height="16" viewBox="0 0 16 16" style="position:absolute;left:-1px;top:-1px"><path d="M3.5 3L13 8L3.5 13Z" fill="#b0b0b0"/><path d="M3.5 13L3.5 3L13 8" stroke="#fff" stroke-width="1.2" fill="none"/><path d="M13 8L3.5 13" stroke="#000" stroke-width="1.1" fill="none"/></svg></div>
</div>

<!-- status bar -->
<div id="status" class="a"><div id="st1" class="a"></div><div id="st2" class="a"></div></div>
<div id="botf" class="a"><div class="a notch" style="left:28px"></div><div class="a notch" style="left:949px"></div></div>

<!-- Tools menu -->
<div class="a menu" style="left:149px;top:49px;width:246px;height:218px">
 <div class="tear2" style="left:1px;top:3px;width:242px"></div>
 <div class="tear" style="left:2px;top:4px;width:241px"></div>
 <svg class="a" style="left:6px;top:12px" width="14" height="14" viewBox="0 0 14 14"><defs><linearGradient id="gt" x1="0" y1="0" x2="0" y2="1"><stop offset="0" stop-color="#fff"/><stop offset=".5" stop-color="#e4f0e4"/><stop offset=".5" stop-color="#70aa70"/><stop offset="1" stop-color="#5a965a"/></linearGradient></defs><path d="M2.5 2.5L11.5 7L2.5 11.5Z" fill="url(#gt)" stroke="#505850" stroke-width="1"/></svg>
 <div class="it" style="left:26px;top:10px;letter-spacing:0.131px"><u>N</u>ext bookmark</div><div class="sc" style="right:8px;top:10px;letter-spacing:0.142px">Ctl+B</div>
 <svg class="a" style="left:4px;top:34px" width="14" height="14" viewBox="0 0 14 14"><path d="M11.5 2.5L2.5 7L11.5 11.5Z" fill="url(#gt)" stroke="#505850" stroke-width="1"/></svg>
 <div class="it" style="left:26px;top:32px;letter-spacing:0.21px"><u>P</u>revious bookmark</div><div class="sc" style="right:8px;top:32px;letter-spacing:0.017px">Shft+Ctl+B</div>
 <svg class="a" style="left:5px;top:56px" width="14" height="14" viewBox="0 0 14 14"><path d="M1.6 8.9L2 10.4L8.6 12.2L12.3 5.2L11.8 1.8Z" fill="#f4f4f0" stroke="#5a4a40" stroke-width=".8"/><path d="M4.9 2.5L11.4 1.6L8.6 8.8L1.8 7.9Z" fill="#c6b877" stroke="#6e6440" stroke-width=".8"/><path d="M1.7 9.6L8.4 11.2" stroke="#b0a8a0" stroke-width=".6"/></svg>
 <div class="it" style="left:26px;top:54px;letter-spacing:0.234px"><u>T</u>oggle bookmark</div><div class="sc" style="right:8px;top:54px;letter-spacing:0.117px">Alt+B</div>
 <svg class="a" style="left:3px;top:77px" width="18" height="16" viewBox="0 0 18 16"><path d="M12.5 9.5L17 11.2L14 13.5Z" fill="#000"/><path d="M1.8 4.2C1.8 2 9.4 2 9.4 4.2L8.6 12.6C8.6 14 3.2 14 3.2 12.6Z" fill="#7c9c7c" stroke="#3c503c" stroke-width=".8"/><ellipse cx="5.6" cy="4" rx="3.8" ry="1.5" fill="#86a686" stroke="#3c503c" stroke-width=".7"/><path d="M9.6 5.2L13.2 13L6 13Z" fill="#f4faf4" stroke="#707870" stroke-width=".7"/><path d="M8 11.4L9.6 9L11.2 11.4Z" fill="none" stroke="#58b058" stroke-width="1"/><path d="M11 2.5L12 1.2M12.5 4.5L14 4" stroke="#404840" stroke-width=".7"/></svg>
 <div class="it" style="left:26px;top:76px;letter-spacing:0.153px"><u>C</u>lear bookmarks</div>
 <div class="sep" style="left:1px;top:95px;width:242px"></div>
 <svg class="a" style="left:5px;top:104px" width="16" height="14" viewBox="0 0 16 14"><path d="M1.8 9.4L3.6 6.2L4.4 7L7.6 4.8L8.8 6.8L5.6 8.8L6.2 10L3 11.2Z" fill="#9cc098" stroke="#4c6448" stroke-width=".8" stroke-linejoin="round"/><circle cx="9.6" cy="5.9" r="2.1" fill="#e4b0a0" stroke="#907468" stroke-width=".6"/></svg>
 <div class="it" style="left:26px;top:102px;letter-spacing:0.175px"><u>C</u>omplete word</div><div class="sc" style="right:8px;top:102px;letter-spacing:0.277px">Ctl+Space</div>
 <div class="sep" style="left:1px;top:121px;width:242px"></div>
 <div class="it" style="left:26px;top:128px;letter-spacing:0.301px">Convert <u>E</u>OLs</div><div class="arr" style="left:229px;top:132px"></div>
 <div class="sep" style="left:1px;top:147px;width:242px"></div>
 <div class="a sel" style="left:1px;top:151px;width:242px;height:20px"></div>
 <div class="it" style="left:26px;top:154px;letter-spacing:0.538px">CVS</div><div class="arr" style="left:229px;top:158px"></div>
 <div class="sep" style="left:1px;top:171px;width:242px"></div>
 <div class="it" style="left:26px;top:178px;letter-spacing:0.333px">Clean–up recent files list</div>
 <div class="it" style="left:26px;top:198px;letter-spacing:0.286px">Delete recent files list</div>
</div>
<!-- CVS submenu -->
<div class="a menu" style="left:388px;top:206px;width:163px;height:274px;z-index:11">
 <div class="tear2" style="left:1px;top:3px;width:159px"></div>
 <div class="tear" style="left:2px;top:4px;width:158px"></div>
 <div class="it" style="left:7px;top:10px;letter-spacing:0.13px">Commit file to CVS</div>
 <div class="it" style="left:7px;top:30px;letter-spacing:0.144px">Update file from CVS</div>
 <div class="it" style="left:7px;top:50px;letter-spacing:0.24px">CVS diff file</div>
 <div class="it" style="left:7px;top:70px;letter-spacing:0.238px">File’s CVS status</div>
 <div class="it" style="left:7px;top:90px;letter-spacing:0.39px">File’s CVS log</div>
 <div class="it" style="left:7px;top:110px;letter-spacing:0.322px">Add file to CVS</div>
 <div class="it" style="left:7px;top:130px;letter-spacing:0.14px">Remove file from CVS</div>
 <div class="sep" style="left:2px;top:147px;width:159px"></div>
 <div class="it" style="left:7px;top:154px;letter-spacing:0.203px">Commit directory to CVS</div>
 <div class="it" style="left:7px;top:174px;letter-spacing:0.196px">Update directory from CVS</div>
 <div class="it" style="left:7px;top:194px;letter-spacing:0.275px">CVS diff directory</div>
 <div class="it" style="left:7px;top:214px;letter-spacing:0.254px">Directory’s CVS status</div>
 <div class="it" style="left:7px;top:234px;letter-spacing:0.368px">Directory’s CVS log</div>
 <div class="it" style="left:7px;top:254px;letter-spacing:0.357px">Add directory to CVS</div>
</div>

</body>
</html>
